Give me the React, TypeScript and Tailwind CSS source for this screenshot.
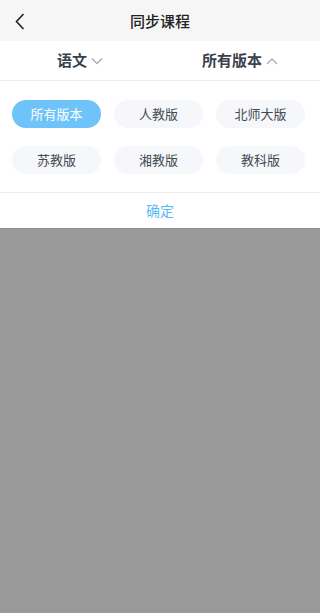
import React, { useState } from 'react';

const versions = ['所有版本', '人教版', '北师大版', '苏教版', '湘教版', '教科版'];

const Chevron = ({ up }: { up?: boolean }) => (
  <svg width="12" height="8" viewBox="0 0 12 8" className="ml-[4px]">
    <path
      d={up ? 'M1 7 L6 2 L11 7' : 'M1 1.5 L6 6.5 L11 1.5'}
      fill="none"
      stroke="#a9aeb6"
      strokeWidth="1.4"
    />
  </svg>
);

const App = () => {
  const [selected, setSelected] = useState(0);

  return (
    <div
      className="flex flex-col h-screen bg-[#999999]"
      style={{ fontFamily: '"Noto Sans CJK SC", "Noto Sans", sans-serif' }}
    >
      <div className="relative h-[41px] bg-[#f6f6f6] flex items-center justify-center shrink-0">
        <button className="absolute left-[12px] top-[12px] w-[16px] h-[18px] flex items-center justify-center">
          <svg width="10" height="17" viewBox="0 0 10 17">
            <path d="M8.5 1 L1.5 8.5 L8.5 16" fill="none" stroke="#222" strokeWidth="1.6" />
          </svg>
        </button>
        <h1 className="text-[15px] font-medium text-[#222] leading-none">同步课程</h1>
      </div>

      <div className="bg-white shrink-0">
        <div className="h-[40px] flex border-b border-[#eeeeee]">
          <div className="flex-1 flex items-center justify-center">
            <span className="text-[15px] font-bold text-[#3a414d]">语文</span>
            <Chevron />
          </div>
          <div className="flex-1 flex items-center justify-center">
            <span className="text-[15px] font-bold text-[#3a414d]">所有版本</span>
            <Chevron up />
          </div>
        </div>

        <div className="grid grid-cols-3 gap-x-[13px] gap-y-[18px] pl-[12px] pr-[15px] pt-[19px] pb-[18px] border-b border-[#eeeeee]">
          {versions.map((v, i) => (
            <button
              key={v}
              onClick={() => setSelected(i)}
              className={`h-[28px] rounded-full text-[13px] ${
                selected === i ? 'bg-[#6ec4f8] text-white' : 'bg-[#f5f7fa] text-[#454a52]'
              }`}
            >
              {v}
            </button>
          ))}
        </div>

        <div className="h-[35px] flex items-center justify-center">
          <span className="text-[14px] text-[#5cb9f4]">确定</span>
        </div>
      </div>

      <div className="flex-1 bg-[#999999] border-t border-[#8d8d8d]" />
    </div>
  );
};

export default App;
